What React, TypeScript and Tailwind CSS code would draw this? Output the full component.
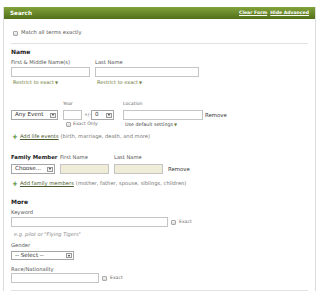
const LABEL = "text-[5.2px] leading-[8px] text-[#555]"

function Check({ className = "" }: { className?: string }) {
  return (
    <span
      className={
        "block h-[5px] w-[5px] shrink-0 rounded-[1px] border border-[#a9a9a9] bg-gradient-to-b from-[#f4f4f4] to-[#dcdcdc] " +
        className
      }
    />
  )
}

function Select({ text, w, h = 10 }: { text: string; w: number; h?: number }) {
  return (
    <div
      className="flex items-center justify-between border border-[#a6a6a6] bg-white pl-[3px] pr-[1px]"
      style={{ width: w, height: h }}
    >
      <span className="text-[5.6px] leading-none text-[#333]">{text}</span>
      <span className="flex h-[5px] w-[6px] items-center justify-center border border-[#9a9a9a] bg-[#f2f2f2]">
        <span className="block h-0 w-0 border-x-[1.5px] border-t-[2px] border-x-transparent border-t-[#333]" />
      </span>
    </div>
  )
}

function Input({ w, h = 10, beige = false }: { w: number; h?: number; beige?: boolean }) {
  return (
    <div
      className={
        "border border-[#c4c4c4] " + (beige ? "bg-[#efedd7]" : "bg-white")
      }
      style={{ width: w, height: h }}
    />
  )
}

function Caret() {
  return <span className="ml-[1px] inline-block text-[4px] text-[#6b7a3a]">▼</span>
}

export default function App() {
  return (
    <div className="h-[291px] w-[320px] overflow-hidden bg-white pt-[7px] font-['DejaVu_Sans',sans-serif]">
      <div className="ml-[3px] h-[300px] w-[313px] border-x border-[#dcdcdc]">
        {/* Header */}
        <div className="flex h-[12px] items-center justify-between bg-gradient-to-b from-[#82a23a] to-[#52701a] pl-[6px] pr-[6px]">
          <span className="text-[5.7px] font-bold text-white">Search</span>
          <div className="flex gap-[3px] text-[4.6px] font-bold text-white underline">
            <span>Clear Form</span>
            <span>Hide Advanced</span>
          </div>
        </div>

        <div className="pl-[7px] pr-[7px]">
          <div className="mt-[10px] flex h-[8px] items-center gap-[3px] pl-[2px]">
            <Check />
            <span className="text-[5.2px] text-[#555]">Match all terms exactly</span>
          </div>

          <div className="mt-[6px] border-t border-[#e2e2e2]" />

          {/* Name */}
          <div className="mt-[4px] text-[6px] font-bold leading-[8px] text-[#222]">Name</div>
          <div className="mt-[2px] flex">
            <div className="w-[84px]">
              <div className={LABEL}>First &amp; Middle Name(s)</div>
              <div className="mt-[1px]"><Input w={79} /></div>
              <div className="mt-[1px] pl-[2px] text-[5px] leading-[8px] text-[#6b7a3a]">
                Restrict to exact<Caret />
              </div>
            </div>
            <div>
              <div className={LABEL}>Last Name</div>
              <div className="mt-[1px]"><Input w={104} /></div>
              <div className="mt-[1px] pl-[2px] text-[5px] leading-[8px] text-[#6b7a3a]">
                Restrict to exact<Caret />
              </div>
            </div>
          </div>

          {/* Life event */}
          <div className="mt-[13px] flex">
            <div className="w-[52px] pt-[10px]">
              <Select text="Any Event" w={47} />
            </div>
            <div className="w-[60px]">
              <div className="text-[4.6px] leading-[7px] text-[#666]">Year</div>
              <div className="mt-[3px] flex items-center">
                <Input w={19} />
                <span className="ml-[2px] w-[7px] text-[4.6px] text-[#666]">+/-</span>
                <Select text="0" w={23} />
              </div>
              <div className="mt-[1px] flex h-[7px] items-center gap-[2px] pl-[3px]">
                <Check />
                <span className="text-[4.6px] text-[#666]">Exact Only</span>
              </div>
            </div>
            <div>
              <div className="text-[4.6px] leading-[7px] text-[#666]">Location</div>
              <div className="mt-[3px] flex items-center">
                <Input w={80} />
                <span className="ml-[2px] text-[5.4px] text-[#333]">Remove</span>
              </div>
              <div className="mt-[1px] pl-[2px] text-[4.8px] leading-[7px] text-[#444]">
                Use default settings<Caret />
              </div>
            </div>
          </div>

          <div className="mt-[5px] flex h-[8px] items-center gap-[2px] pl-[1px] text-[5.2px]">
            <span className="text-[7px] font-bold leading-none text-[#3f7f1f]">+</span>
            <span className="text-[#4b5a2c] underline">Add life events</span>
            <span className="text-[#777]">(birth, marriage, death, and more)</span>
          </div>

          {/* Family member */}
          <div className="mt-[12px] flex">
            <div className="w-[49px]">
              <div className="text-[5.4px] font-bold leading-[8px] text-[#222]">Family Member</div>
              <div className="mt-[3px]"><Select text="Choose..." w={44} /></div>
            </div>
            <div className="w-[54px]">
              <div className={LABEL}>First Name</div>
              <div className="mt-[3px]"><Input w={49} beige /></div>
            </div>
            <div>
              <div className={LABEL}>Last Name</div>
              <div className="mt-[3px] flex items-center">
                <Input w={49} beige />
                <span className="ml-[5px] text-[5.4px] text-[#333]">Remove</span>
              </div>
            </div>
          </div>

          <div className="mt-[6px] flex h-[8px] items-center gap-[2px] pl-[1px] text-[5.2px]">
            <span className="text-[7px] font-bold leading-none text-[#3f7f1f]">+</span>
            <span className="text-[#4b5a2c] underline">Add family members</span>
            <span className="text-[#777]">(mother, father, spouse, siblings, children)</span>
          </div>

          {/* More */}
          <div className="mt-[10px] text-[6px] font-bold leading-[8px] text-[#222]">More</div>
          <div className={"mt-[2px] " + LABEL}>Keyword</div>
          <div className="mt-[1px] flex items-center gap-[3px]">
            <Input w={157} />
            <Check />
            <span className="text-[4.6px] text-[#666]">Exact</span>
          </div>
          <div className="mt-[3px] pl-[3px] text-[5px] italic leading-[8px] text-[#888]">
            e.g. pilot or "Flying Tigers"
          </div>

          <div className={"mt-[3px] " + LABEL}>Gender</div>
          <div className="mt-[2px]"><Select text="-- Select --" w={63} h={9} /></div>

          <div className={"mt-[5px] " + LABEL}>Race/Nationality</div>
          <div className="flex items-center gap-[3px]">
            <Input w={88} />
            <Check />
            <span className="text-[4.6px] text-[#666]">Exact</span>
          </div>

          <div className="mt-[7px] border-t border-[#e2e2e2]" />
        </div>
      </div>
    </div>
  )
}
